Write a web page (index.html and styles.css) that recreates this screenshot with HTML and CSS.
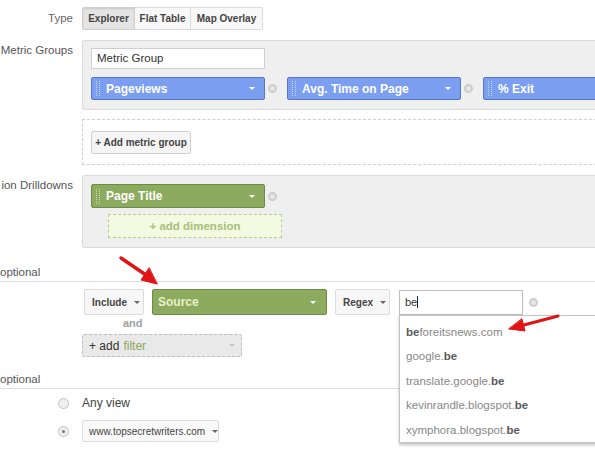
FILE: index.html
```html
<!DOCTYPE html>
<html>
<head>
<meta charset="utf-8">
<link rel="stylesheet" href="styles.css">
</head>
<body>
<div class="page">
  <div class="row row-type">
    <div class="label label-type">Type</div>
    <div class="tabs">
      <span class="tab tab-explorer active">Explorer</span><span class="tab tab-flat">Flat Table</span><span class="tab tab-map">Map Overlay</span>
    </div>
  </div>

  <div class="row row-metric">
    <div class="label label-panel">Metric Groups</div>
    <div class="content">
      <div class="panel metric-panel">
        <div class="text-input">Metric Group</div>
        <div class="chips">
          <div class="chip blue"><span class="grip"></span><span class="chip-text">Pageviews</span><span class="caret"></span></div>
          <span class="remove"></span>
          <div class="chip blue"><span class="grip"></span><span class="chip-text">Avg. Time on Page</span><span class="caret"></span></div>
          <span class="remove"></span>
          <div class="chip blue"><span class="grip"></span><span class="chip-text">% Exit</span><span class="caret"></span></div>
        </div>
      </div>
      <div class="dashed-box">
        <span class="btn">+ Add metric group</span>
      </div>
    </div>
  </div>

  <div class="row row-dim">
    <div class="label label-panel">ion Drilldowns</div>
    <div class="content">
      <div class="panel dim-panel">
        <div class="chips">
          <div class="chip green"><span class="grip"></span><span class="chip-text">Page Title</span><span class="caret"></span></div>
          <span class="remove"></span>
        </div>
        <div class="add-dim">+ add dimension</div>
      </div>
    </div>
  </div>

  <div class="section-head head-filters">optional</div>

  <div class="filter-row">
    <span class="select sel-include">Include<span class="caret dark"></span></span>
    <div class="chip green source"><span class="chip-text">Source</span><span class="caret"></span></div>
    <span class="select sel-regex">Regex<span class="caret dark"></span></span>
    <div class="input-wrap">
      <div class="text-input filter-input">be<span class="cursor"></span></div>
      <ul class="suggest">
        <li><b>be</b>foreitsnews.com</li>
        <li>google.<b>be</b></li>
        <li>translate.google.<b>be</b></li>
        <li>kevinrandle.blogspot.<b>be</b></li>
        <li>xymphora.blogspot.<b>be</b></li>
      </ul>
    </div>
    <span class="remove filter-remove"></span>
  </div>
  <div class="and">and</div>
  <div class="add-filter">+ add <span class="green-text">filter</span><span class="caret light"></span></div>

  <div class="section-head head-views">optional</div>

  <div class="radio-row row-any">
    <span class="radio-cell"><span class="radio"></span></span>
    <span class="any-text">Any view</span>
  </div>
  <div class="radio-row row-site">
    <span class="radio-cell"><span class="radio checked"></span></span>
    <span class="select sel-site">www.topsecretwriters.com<span class="caret dark"></span></span>
  </div>

  <svg class="annotations" width="595" height="460" viewBox="0 0 595 460">
    <g fill="#e01414" stroke="#e01414" stroke-linecap="round">
      <line x1="121" y1="258" x2="146" y2="275" stroke-width="3.5"/>
      <polygon points="157,284 141,280 149,268" stroke-width="1"/>
      <line x1="558" y1="316" x2="522" y2="325.5" stroke-width="3"/>
      <polygon points="509,329 525,331 522,319" stroke-width="1"/>
    </g>
  </svg>
</div>
</body>
</html>
```

FILE: styles.css
```css
* { box-sizing: border-box; }
html, body { margin: 0; padding: 0; }
body {
  width: 595px;
  height: 460px;
  overflow: hidden;
  background: #fff;
  font-family: "Liberation Sans", Arial, sans-serif;
  color: #333;
}
.page { position: relative; width: 595px; height: 460px; overflow: hidden; }

.row { display: flex; align-items: flex-start; }
.label {
  width: 82px;
  flex: none;
  padding-right: 9px;
  text-align: right;
  font-size: 11px;
  color: #555;
  white-space: nowrap;
}
.content { flex: none; width: 540px; }

/* Type */
.row-type { margin-top: 7px; }
.label-type { line-height: 23px; font-size: 11.5px; color: #666; }
.tabs { display: flex; }
.tab {
  height: 23px;
  line-height: 21px;
  text-align: center;
  font-size: 10px;
  font-weight: bold;
  color: #444;
  background: #f8f8f8;
  border: 1px solid #dcdcdc;
  border-left: none;
}
.tab-explorer { width: 53px; }
.tab-flat { width: 56px; }
.tab-map { width: 72px; }
.tab:first-child { border-left: 1px solid #dcdcdc; border-radius: 2px 0 0 2px; }
.tab:last-child { border-radius: 0 2px 2px 0; }
.tab.active { background: #e4e4e4; border-color: #cfcfcf; box-shadow: inset 0 1px 2px rgba(0,0,0,.12); }

/* panels */
.row-metric { margin-top: 10px; }
.label-panel { padding-top: 4px; line-height: 13px; font-size: 11.5px; }
.panel {
  background: #efefef;
  border: 1px solid #dadada;
  border-right: none;
  border-radius: 3px 0 0 3px;
}
.metric-panel { padding: 7px 8px 9px 8px; }
.text-input {
  width: 174px;
  height: 21px;
  border: 1px solid #cfcfcf;
  background: #fff;
  font-size: 11.5px;
  line-height: 19px;
  padding-left: 5px;
  color: #333;
}
.chips { display: flex; align-items: center; }
.metric-panel .chips { margin-top: 8px; }
.chip {
  flex: none;
  width: 174px;
  height: 23px;
  border-radius: 2px;
  display: flex;
  align-items: center;
  padding: 0 9px 0 4px;
  color: #fff;
}
.chip.blue { background: #7b9ef1; border: 1px solid #5676cb; }
.chip.green { background: #8dab5f; border: 1px solid #6e8b45; }
.grip {
  width: 4px;
  height: 15px;
  border-left: 1px dotted rgba(255,255,255,.55);
  border-right: 1px dotted rgba(255,255,255,.55);
  margin-right: 6px;
  flex: none;
}
.chip-text { font-size: 12px; font-weight: bold; flex: 1; white-space: nowrap; overflow: hidden; }
.caret {
  width: 0; height: 0;
  border-left: 3px solid transparent;
  border-right: 3px solid transparent;
  border-top: 3px solid #fff;
  flex: none;
}
.caret.dark { border-top-color: #666; margin-left: 7px; }
.caret.light { border-top-color: #c8c8c8; }
.remove {
  flex: none;
  width: 9px;
  height: 9px;
  border-radius: 50%;
  border: 2px solid #cdcdcd;
  background: #e6e6e6;
  margin: 0 10px 0 3px;
}

.dashed-box {
  margin-top: 9px;
  height: 46px;
  border: 1px dashed #cfcfcf;
  border-right: none;
  padding: 11px 8px;
}
.btn {
  display: inline-block;
  width: 100px;
  height: 23px;
  line-height: 21px;
  text-align: center;
  background: #f5f5f5;
  border: 1px solid #cfcfcf;
  border-radius: 2px;
  font-size: 10px;
  font-weight: bold;
  color: #444;
}

/* dimensions */
.row-dim { margin-top: 10px; }
.dim-panel { padding: 8px 8px 9px 8px; height: 73px; }
.dim-panel .chip { height: 24px; }
.add-dim {
  margin: 6px 0 0 17px;
  width: 174px;
  height: 24px;
  line-height: 22px;
  border: 1px dashed #b9cd8b;
  background: #f4f9e2;
  text-align: center;
  font-size: 11.5px;
  font-weight: bold;
  color: #a7c07a;
}

/* section headers */
.section-head {
  height: 20px;
  border-bottom: 1px solid #dedede;
  font-size: 11.5px;
  color: #555;
  padding-top: 4px;
  line-height: 13px;
}
.head-filters { margin-top: 14px; }
.head-views { margin-top: 12px; }

/* filter row */
.filter-row { display: flex; align-items: center; margin-top: 7px; padding-left: 84px; height: 26px; }
.select {
  flex: none;
  display: inline-flex;
  align-items: center;
  height: 26px;
  padding: 0 8px 0 7px;
  background: #f7f7f7;
  border: 1px solid #dcdcdc;
  border-radius: 2px;
  font-size: 10px;
  font-weight: bold;
  color: #444;
}
.sel-include { width: 60px; }
.sel-regex { width: 55px; margin-left: 8px; }
.chip.source { width: 175px; height: 26px; margin-left: 8px; padding: 0 10px 0 5px; }
.source .chip-text { font-size: 12px; color: #e6f2c9; }
.input-wrap { position: relative; margin-left: 9px; }
.filter-input { width: 124px; height: 25px; line-height: 23px; border-color: #bdbdbd; padding-left: 5px; font-size: 11px; }
.cursor { display: inline-block; width: 1px; height: 12px; background: #222; vertical-align: -2px; }
.filter-remove { margin-left: 6px; }
.suggest {
  position: absolute;
  left: 0;
  top: 25px;
  width: 205px;
  height: 128px;
  margin: 0;
  padding: 4px 0 0 0;
  list-style: none;
  background: #fff;
  border: 1px solid #c4c4c4;
  box-shadow: 0 2px 3px rgba(0,0,0,.25);
  z-index: 2;
}
.suggest li {
  height: 24.5px;
  line-height: 24px;
  padding-left: 6px;
  font-size: 11.5px;
  color: #878787;
  white-space: nowrap;
}
.suggest b { color: #5a5a5a; }

.and { padding-left: 123px; margin-top: 2px; font-size: 11px; font-weight: bold; color: #a0a0a0; line-height: 13px; }
.add-filter {
  margin: 4px 0 0 82px;
  width: 160px;
  height: 23px;
  display: flex;
  align-items: center;
  padding: 0 6px;
  background: #e9e9e9;
  border: 1px dashed #bdbdbd;
  border-radius: 2px;
  font-size: 12px;
  color: #333;
}
.green-text { color: #8aa85a; margin-left: 4px; flex: 1; }

/* radio rows */
.radio-row { display: flex; align-items: center; }
.row-any { margin-top: 7px; height: 14px; }
.row-site { margin-top: 10px; height: 22px; }
.radio-cell { width: 82px; flex: none; display: flex; padding-left: 58px; }
.radio {
  width: 11px;
  height: 11px;
  border-radius: 50%;
  border: 1px solid #c2c2c2;
  background: #efefef;
  position: relative;
}
.radio.checked::after {
  content: "";
  position: absolute;
  left: 3px; top: 3px;
  width: 3px; height: 3px;
  border-radius: 50%;
  background: #777;
}
.any-text { font-size: 12px; color: #444; }
.sel-site { width: 137px; height: 22px; font-weight: normal; color: #444; padding: 0 8px 0 6px; background: #f9f9f9; }

.annotations { position: absolute; left: 0; top: 0; pointer-events: none; z-index: 5; }
```
